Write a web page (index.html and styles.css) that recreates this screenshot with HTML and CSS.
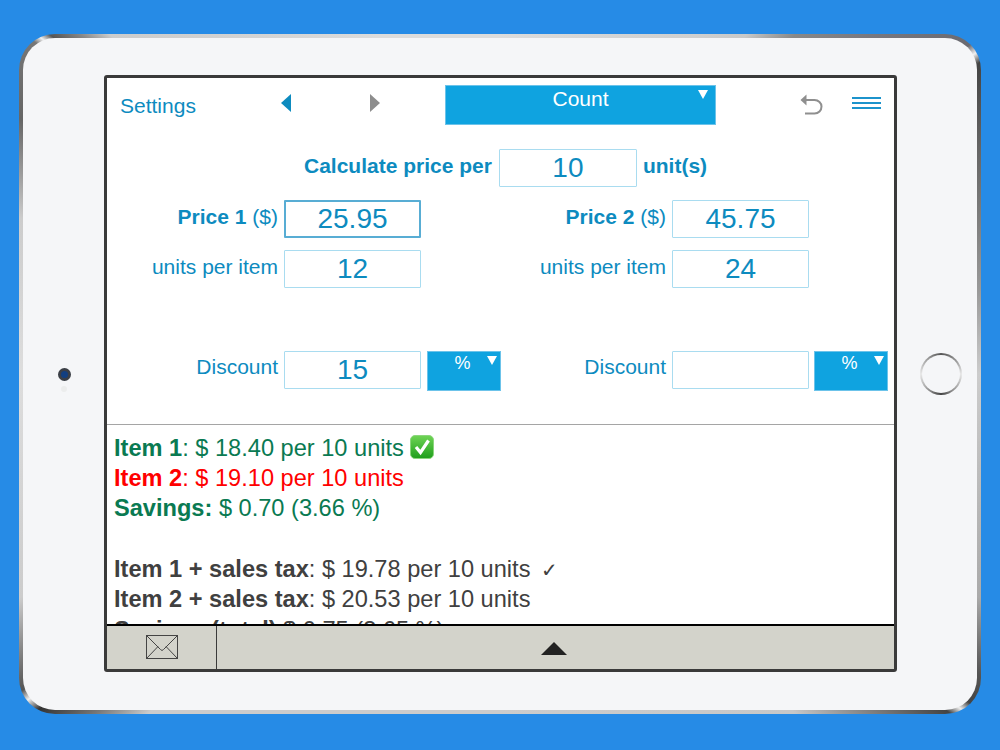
FILE: index.html
```html
<!DOCTYPE html>
<html lang="en">
<head>
<meta charset="utf-8">
<title>Unit Price</title>
<link rel="stylesheet" href="styles.css">
</head>
<body>
<div class="tablet">
  <div class="tablet-face">
    <span class="camera"></span>
    <span class="sensor"></span>
    <span class="home"></span>
    <main class="screen">
      <header class="toolbar">
        <span class="settings">Settings</span>
        <svg class="arrow arrow-prev" width="10" height="18" viewBox="0 0 10 18"><path d="M10 0V18L0 9Z" fill="#0d8bbf"/></svg>
        <svg class="arrow arrow-next" width="10" height="18" viewBox="0 0 10 18"><path d="M0 0V18L10 9Z" fill="#8d8d8d"/></svg>
        <div class="select select-wide"><span>Count</span><i class="caret"></i></div>
        <svg class="undo" width="23" height="22" viewBox="0 0 23 22"><path d="M4 7H14.500C18.500 7 21.500 10 21.500 13.500C21.500 17.500 18.500 20.500 14.500 20.500H5" fill="none" stroke="#8f8f8f" stroke-width="2"/><path d="M0.500 7L6.500 1.500V12.500Z" fill="#8f8f8f"/></svg>
        <div class="menu"><i></i><i></i><i></i></div>
      </header>

      <div class="calc-row">
        <span class="label strong">Calculate price per</span>
        <div class="field">10</div>
        <span class="label strong">unit(s)</span>
      </div>

      <section class="form">
        <span class="label"><b>Price 1</b> ($)</span>
        <div class="field field-focus">25.95</div>
        <span></span>
        <span class="label"><b>Price 2</b> ($)</span>
        <div class="field">45.75</div>
        <span></span>

        <span class="label">units per item</span>
        <div class="field">12</div>
        <span></span>
        <span class="label">units per item</span>
        <div class="field">24</div>
        <span></span>

        <span class="label discount">Discount</span>
        <div class="field discount">15</div>
        <div class="select select-small discount"><span>%</span><i class="caret"></i></div>
        <span class="label discount">Discount</span>
        <div class="field discount"></div>
        <div class="select select-small select-end discount"><span>%</span><i class="caret"></i></div>
      </section>

      <section class="results">
        <p class="good"><b>Item 1</b>: $ 18.40 per 10 units <svg class="tick" width="24" height="24" viewBox="0 0 24 24"><defs><linearGradient id="tickFill" x1="0" y1="0" x2="0" y2="1"><stop offset="0" stop-color="#6fd455"/><stop offset="1" stop-color="#1f9e1c"/></linearGradient></defs><rect x="0.500" y="0.500" width="23" height="23" rx="4.500" fill="url(#tickFill)" stroke="#8bd67c"/><path d="M6 12L10.500 17.500L18.500 5.500" fill="none" stroke="#fff" stroke-width="3.200"/></svg></p>
        <p class="bad"><b>Item 2</b>: $ 19.10 per 10 units</p>
        <p class="good"><b>Savings:</b> $ 0.70 (3.66 %)</p>
        <p class="gap">&nbsp;</p>
        <p><b>Item 1 + sales tax</b>: $ 19.78 per 10 units <span class="check">✓</span></p>
        <p><b>Item 2 + sales tax</b>: $ 20.53 per 10 units</p>
        <p class="last"><b>Savings (total)</b> $ 0.75 (3.65 %)</p>
      </section>

      <footer class="bottom">
        <div class="mail">
          <svg width="32" height="24" viewBox="0 0 32 24"><rect x="0.500" y="0.500" width="31" height="23" fill="none" stroke="#444"/><path d="M0.500 0.500L14.500 14.500L16 15.500L17.500 14.500L31.500 0.500M0.500 23.500L12 11.500M31.500 23.500L20 11.500" fill="none" stroke="#444"/></svg>
        </div>
        <div class="expand"><i class="up"></i></div>
      </footer>
    </main>
  </div>
</div>
</body>
</html>
```

FILE: styles.css
```css
* { box-sizing: border-box; }

html, body { margin: 0; height: 100%; }

body {
  background: #268be6;
  font-family: "Liberation Sans", Arial, sans-serif;
  overflow: hidden;
}

.tablet {
  width: 962px;
  height: 680px;
  margin: 34px 0 0 19px;
  padding: 4px;
  border-radius: 36px;
  background: conic-gradient(#dcdcdc 0deg, #cfcfcf 30deg, #c8c8c8 36deg, #888 41deg, #77777f 48deg, #6a6a70 55deg, #f0f0f0 56deg, #444 57deg, #666 65deg, #999 80deg, #ccc 90deg, #aaa 115deg, #555 122deg, #444 125deg, #eee 126deg, #444 127deg, #666 130deg, #c8c8c8 139deg, #ccc 180deg, #ccc 226deg, #777 230deg, #333 234deg, #f0f0f0 235.400deg, #555 236.500deg, #ccc 245deg, #ddd 270deg, #ccc 288deg, #666 298deg, #777 305.500deg, #f0f0f0 306.200deg, #555 307deg, #888 309deg, #ccc 311deg, #dcdcdc 340deg);
}

.tablet-face {
  position: relative;
  height: 100%;
  padding: 37px 80px 38px 81px;
  border-radius: 32px;
  background: #f5f6f8;
}

.camera {
  position: absolute;
  left: 35px;
  top: 330px;
  width: 13px;
  height: 13px;
  border: 3px solid #3b3f46;
  border-radius: 50%;
  background: #123f80;
}

.sensor {
  position: absolute;
  left: 38px;
  top: 348px;
  width: 6px;
  height: 6px;
  border-radius: 50%;
  background: #eceded;
}

.home {
  position: absolute;
  left: 897px;
  top: 315px;
  width: 42px;
  height: 42px;
  padding: 2px;
  border-radius: 50%;
  background: conic-gradient(#555 0deg, #999 50deg, #e8e8e8 90deg, #999 140deg, #444 180deg, #aaa 230deg, #e8e8e8 270deg, #999 320deg, #555 360deg);
}

.home::after {
  content: "";
  display: block;
  height: 100%;
  border-radius: 50%;
  background: #f5f6f8;
}

.screen {
  display: flex;
  flex-direction: column;
  height: 597px;
  border: 3px solid #3a3a3a;
  border-radius: 3px;
  background: #fff;
  color: #0d8bbf;
  font-size: 21px;
}

.toolbar {
  display: flex;
  align-items: flex-start;
  height: 71px;
  padding: 7px 0 0 13px;
}

.settings { width: 161px; margin-top: 9px; line-height: 24px; }
.arrow { flex: none; margin-top: 9px; }
.arrow-next { margin-left: 79px; }

.select {
  position: relative;
  border: 1px solid #6cc3ea;
  background: #0fa3e0;
  color: #fff;
  text-align: center;
}

.select-wide {
  flex: none;
  width: 271px;
  height: 40px;
  margin-left: 65px;
  line-height: 26px;
}

.select-wide .caret { right: 7px; }

.select-small {
  width: 74px;
  height: 40px;
  font-size: 18px;
  line-height: 22px;
}

.select-small span { display: block; padding-right: 3px; }

.select-end { margin-left: -1px; }

.caret {
  position: absolute;
  top: 4px;
  right: 3px;
  width: 0;
  height: 0;
  border-left: 5px solid transparent;
  border-right: 5px solid transparent;
  border-top: 9px solid #fff;
}

.undo { flex: none; margin: 8px 0 0 84px; }

.menu {
  flex: none;
  width: 29px;
  margin: 12px 0 0 29px;
}

.menu i {
  display: block;
  height: 2px;
  margin-bottom: 3px;
  background: #1c93cc;
}

.calc-row {
  display: flex;
  align-items: center;
  gap: 6px;
  height: 38px;
  padding-left: 197px;
}

.calc-row .label { padding-bottom: 4px; }
.calc-row .label:first-child { margin-right: 1px; }

.label { line-height: 26px; white-space: nowrap; }
.strong { font-weight: bold; }

.field {
  height: 38px;
  border: 1px solid #a9dcf0;
  border-radius: 1px;
  background: #fff;
  font-size: 28px;
  line-height: 36px;
  text-align: center;
}

.calc-row .field { width: 138px; }

.field-focus { border: 2px solid #58add4; line-height: 34px; }

.form {
  display: grid;
  grid-template-columns: 171px 137px 73px 160px 137px 74px;
  grid-template-rows: 38px 38px 40px;
  column-gap: 6px;
  row-gap: 12px;
  height: 225px;
  margin-top: 13px;
  align-items: center;
  border-bottom: 1px solid #a5a5a5;
}

.form > .label { padding-bottom: 4px; text-align: right; }
.form > .field { align-self: start; }

.form .discount { margin-top: 51px; align-self: start; }
.form .label.discount { margin-top: 54px; }

.results {
  flex: 1;
  min-height: 0;
  overflow: hidden;
  padding: 8px 0 0 7px;
  color: #404040;
  font-size: 23.600px;
}

.results p { margin: 0; height: 30.200px; line-height: 30px; white-space: nowrap; }
.results .good { color: #0a7a52; }
.results .bad { color: #ff0000; }
.results .last { margin-top: 1px; }
.tick { vertical-align: -3px; }
.check { font-family: "DejaVu Sans", sans-serif; font-size: 20px; margin-left: 4px; }

.bottom {
  flex: none;
  display: flex;
  height: 45px;
  border-top: 2px solid #000;
  background: #d3d3cb;
}

.mail {
  flex: none;
  display: flex;
  justify-content: center;
  align-items: center;
  width: 110px;
  padding-bottom: 1px;
  border-right: 1px solid #3a3a3a;
}

.expand {
  flex: 1;
  display: flex;
  justify-content: center;
  align-items: center;
  padding: 1px 4px 0 0;
}

.up {
  width: 0;
  height: 0;
  border-left: 13px solid transparent;
  border-right: 13px solid transparent;
  border-bottom: 13px solid #222;
}
```
